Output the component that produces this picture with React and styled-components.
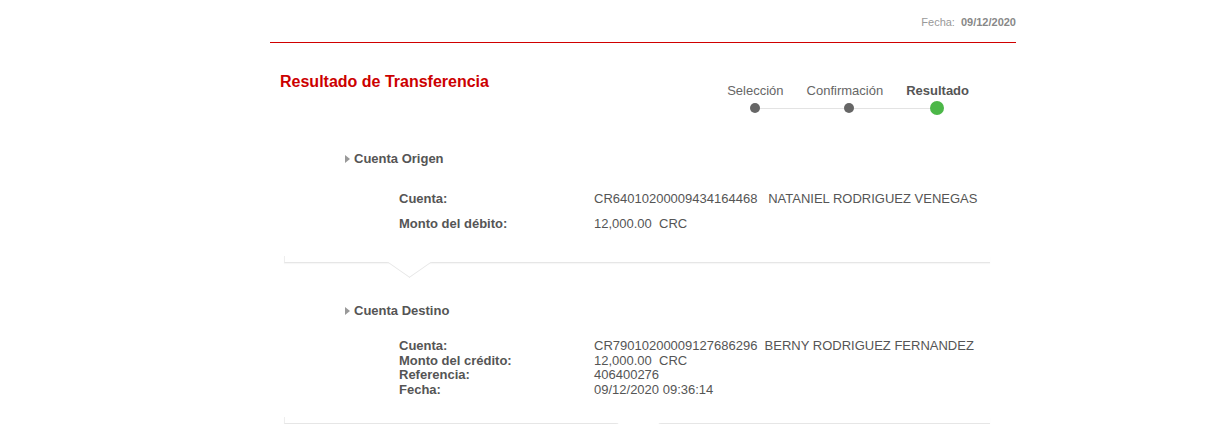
import React from "react";
import styled, { createGlobalStyle } from "styled-components";

const GlobalStyle = createGlobalStyle`
  body {
    margin: 0;
    background: #fff;
    font-family: "Liberation Sans", Arial, sans-serif;
  }
`;

const Page = styled.div`
  padding-left: 270px;
`;

const Container = styled.div`
  width: 746px;
`;

const Header = styled.div`
  height: 42px;
  box-sizing: border-box;
  padding-top: 16px;
  display: flex;
  justify-content: flex-end;
  font-size: 11px;
  line-height: 13px;
  color: #999;
`;

const HeaderValue = styled.strong`
  color: #888;
  margin-left: 6px;
`;

const RedRule = styled.div`
  height: 1px;
  background: #d00000;
`;

const TopRow = styled.div`
  display: flex;
  justify-content: space-between;
  padding: 0 47px 0 10px;
`;

const Title = styled.h1`
  margin: 30px 0 0;
  font-size: 16px;
  line-height: 18px;
  font-weight: bold;
  color: #cc0000;
`;

const Stepper = styled.div`
  margin-top: 40px;
  display: flex;
  gap: 23px;
  position: relative;
`;

const StepLine = styled.div`
  position: absolute;
  left: 28px;
  right: 32px;
  top: 25px;
  height: 1px;
  background: #e3e3e3;
`;

const Step = styled.div`
  display: flex;
  flex-direction: column;
  align-items: center;
  gap: 3px;
  position: relative;
`;

const StepLabel = styled.span`
  font-size: 13px;
  line-height: 15px;
  color: ${(p) => (p.$active ? "#555" : "#666")};
  font-weight: ${(p) => (p.$active ? "bold" : "normal")};
`;

const DotBox = styled.div`
  height: 14px;
  display: flex;
  align-items: center;
  justify-content: center;
  transform: translateX(${(p) => p.$shift || 0}px);
`;

const Dot = styled.span`
  width: ${(p) => (p.$active ? 14 : 10)}px;
  height: ${(p) => (p.$active ? 14 : 10)}px;
  border-radius: 50%;
  background: ${(p) => (p.$active ? "#4cb748" : "#666")};
`;

const Section = styled.div`
  padding-left: 75px;
  margin-top: ${(p) => p.$top}px;
`;

const SectionTitle = styled.div`
  display: flex;
  align-items: center;
  gap: 4px;
  font-size: 13px;
  line-height: 15px;
  font-weight: bold;
  color: #555;
`;

const Caret = styled.span`
  width: 0;
  height: 0;
  border-top: 4.5px solid transparent;
  border-bottom: 4.5px solid transparent;
  border-left: 5px solid #999;
`;

const Rows = styled.div`
  margin-top: ${(p) => p.$top}px;
  padding-left: 54px;
  display: flex;
  flex-direction: column;
  gap: ${(p) => p.$gap}px;
`;

const Row = styled.div`
  display: grid;
  grid-template-columns: 195px 1fr;
  font-size: 13px;
  line-height: ${(p) => p.$lh}px;
  color: #555;
`;

const Label = styled.span`
  font-weight: bold;
`;

const Value = styled.span`
  white-space: pre;
`;

const Divider = styled.div`
  position: relative;
  margin: ${(p) => p.$top}px 26px 0 14px;
  height: 6px;
  border-left: 1px solid #eee;
  border-bottom: 1px solid #e6e6e6;
  box-shadow: 0 1px 1px rgba(0, 0, 0, 0.03);

  &::after {
    content: "";
    position: absolute;
    left: ${(p) => p.$notch - 15}px;
    bottom: -16px;
    width: 30px;
    height: 30px;
    background: #fff;
    border-right: 1px solid #e6e6e6;
    border-bottom: 1px solid #e6e6e6;
    transform: scaleY(0.7) rotate(45deg);
  }
`;

const steps = [
  { label: "Selección" },
  { label: "Confirmación", shift: 4 },
  { label: "Resultado", active: true, shift: -1 },
];

const origen = [
  ["Cuenta:", "CR64010200009434164468   NATANIEL RODRIGUEZ VENEGAS"],
  ["Monto del débito:", "12,000.00  CRC"],
];

const destino = [
  ["Cuenta:", "CR79010200009127686296  BERNY RODRIGUEZ FERNANDEZ"],
  ["Monto del crédito:", "12,000.00  CRC"],
  ["Referencia:", "406400276"],
  ["Fecha:", "09/12/2020 09:36:14"],
];

export default function App() {
  return (
    <Page>
      <GlobalStyle />
      <Container>
        <Header>
          Fecha: <HeaderValue>09/12/2020</HeaderValue>
        </Header>
        <RedRule />

        <TopRow>
          <Title>Resultado de Transferencia</Title>
          <Stepper>
            <StepLine />
            {steps.map((s) => (
              <Step key={s.label}>
                <StepLabel $active={s.active}>{s.label}</StepLabel>
                <DotBox $shift={s.shift}>
                  <Dot $active={s.active} />
                </DotBox>
              </Step>
            ))}
          </Stepper>
        </TopRow>

        <Section $top={36}>
          <SectionTitle>
            <Caret />
            Cuenta Origen
          </SectionTitle>
          <Rows $top={25} $gap={10}>
            {origen.map(([l, v]) => (
              <Row key={l} $lh={15}>
                <Label>{l}</Label>
                <Value>{v}</Value>
              </Row>
            ))}
          </Rows>
        </Section>

        <Divider $top={25} $notch={124} />

        <Section $top={40}>
          <SectionTitle>
            <Caret />
            Cuenta Destino
          </SectionTitle>
          <Rows $top={21} $gap={0}>
            {destino.map(([l, v]) => (
              <Row key={l} $lh={14.7}>
                <Label>{l}</Label>
                <Value>{v}</Value>
              </Row>
            ))}
          </Rows>
        </Section>

        <Divider $top={19} $notch={353} />
      </Container>
    </Page>
  );
}
